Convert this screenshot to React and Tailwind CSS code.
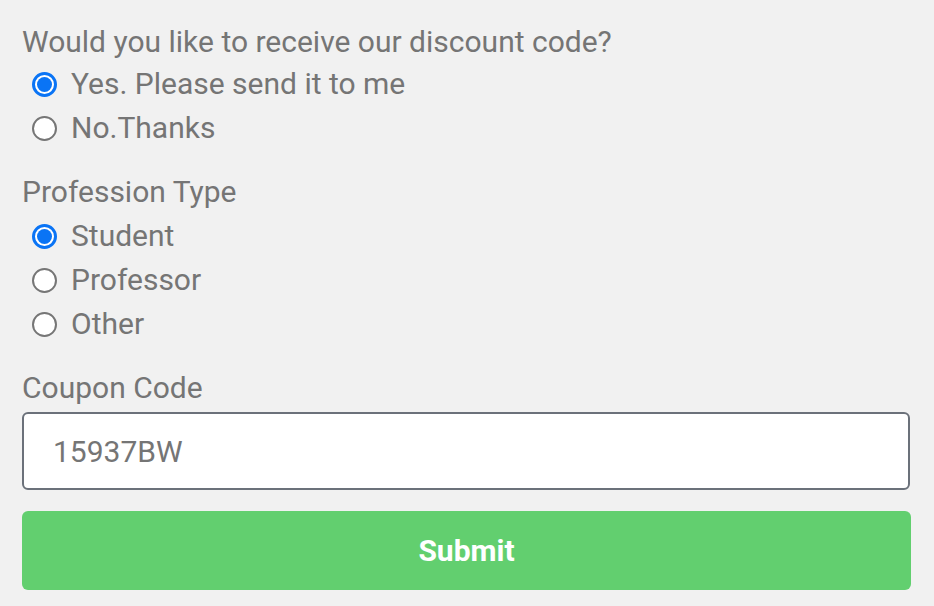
import { useState } from 'react';

function Radio({ label, checked, onClick }) {
  return (
    <label onClick={onClick} className="flex items-center h-[44px] pl-[10px] cursor-pointer">
      {checked ? (
        <span className="w-[25px] h-[25px] rounded-full border-[3px] border-[#0a74f5] bg-white flex items-center justify-center">
          <span className="w-[15px] h-[15px] rounded-full bg-[#0a74f5]" />
        </span>
      ) : (
        <span className="w-[25px] h-[25px] rounded-full border-2 border-[#767676] bg-white" />
      )}
      <span className="ml-[14px]">{label}</span>
    </label>
  );
}

export default function App() {
  const [discount, setDiscount] = useState('yes');
  const [profession, setProfession] = useState('student');
  const [coupon, setCoupon] = useState('15937BW');

  return (
    <div className="min-h-[606px] bg-[#f1f1f1] text-[#757575] text-[30px] leading-[36px] px-[22px] pt-[24px]" style={{ fontFamily: 'Roboto, "Noto Sans", sans-serif' }}>
      <div>Would you like to receive our discount code?</div>
      <div className="mt-[2px]">
        <Radio label="Yes. Please send it to me" checked={discount === 'yes'} onClick={() => setDiscount('yes')} />
        <Radio label="No.Thanks" checked={discount === 'no'} onClick={() => setDiscount('no')} />
      </div>

      <div className="mt-[24px]">Profession Type</div>
      <div className="mt-[4px]">
        <Radio label="Student" checked={profession === 'student'} onClick={() => setProfession('student')} />
        <Radio label="Professor" checked={profession === 'professor'} onClick={() => setProfession('professor')} />
        <Radio label="Other" checked={profession === 'other'} onClick={() => setProfession('other')} />
      </div>

      <div className="mt-[24px]">Coupon Code</div>
      <input
        value={coupon}
        onChange={(e) => setCoupon(e.target.value)}
        className="mt-[6px] block w-[888px] h-[78px] bg-white border-2 border-[#6b717a] rounded-[6px] px-[29px] text-[#757575] outline-none"
      />
      <button type="button" className="mt-[21px] block w-[889px] h-[79px] bg-[#62cf6f] rounded-[6px] text-white font-bold">
        Submit
      </button>
    </div>
  );
}
